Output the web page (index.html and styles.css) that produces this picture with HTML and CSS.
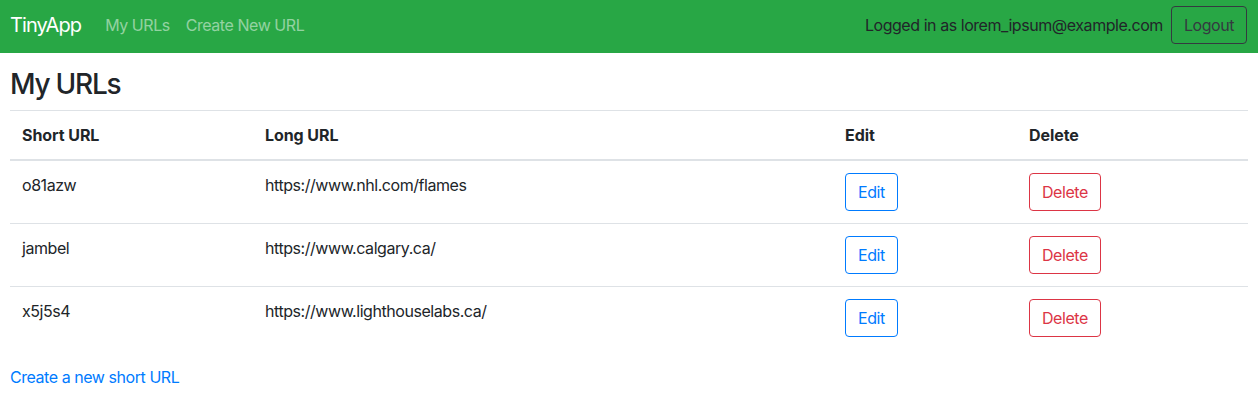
FILE: index.html
```html
<!DOCTYPE html>
<html lang="en">
<head>
<meta charset="utf-8">
<title>TinyApp</title>
<link rel="stylesheet" href="styles.css">
</head>
<body>
<nav class="navbar">
  <div class="nav-left">
    <a class="brand" href="#">TinyApp</a>
    <a class="nav-link" href="#">My URLs</a>
    <a class="nav-link" href="#">Create New URL</a>
  </div>
  <div class="nav-right">
    <span class="nav-text">Logged in as lorem_ipsum@example.com</span>
    <button class="btn btn-dark">Logout</button>
  </div>
</nav>
<main class="page">
  <h1 class="title">My URLs</h1>
  <table class="table">
    <thead>
      <tr>
        <th class="c1">Short URL</th>
        <th class="c2">Long URL</th>
        <th class="c3">Edit</th>
        <th class="c4">Delete</th>
      </tr>
    </thead>
    <tbody>
      <tr>
        <td>o81azw</td>
        <td>https://www.nhl.com/flames</td>
        <td><button class="btn btn-blue">Edit</button></td>
        <td><button class="btn btn-red">Delete</button></td>
      </tr>
      <tr>
        <td>jambel</td>
        <td>https://www.calgary.ca/</td>
        <td><button class="btn btn-blue">Edit</button></td>
        <td><button class="btn btn-red">Delete</button></td>
      </tr>
      <tr>
        <td>x5j5s4</td>
        <td>https://www.lighthouselabs.ca/</td>
        <td><button class="btn btn-blue">Edit</button></td>
        <td><button class="btn btn-red">Delete</button></td>
      </tr>
    </tbody>
  </table>
  <a class="link" href="#">Create a new short URL</a>
</main>
</body>
</html>
```
FILE: styles.css
```css
* { box-sizing: border-box; }
html, body { margin: 0; }
body {
  font-family: Inter, "Noto Sans", "Liberation Sans", sans-serif;
  font-size: 16px;
  line-height: 1.5;
  letter-spacing: -0.028em;
  color: #212529;
  background: #fff;
}
a { text-decoration: none; }
.navbar {
  background: #28a745;
  height: 53px;
  padding: 6px 11px 9px 10px;
  display: flex;
  justify-content: space-between;
  align-items: center;
}
.nav-left { display: flex; align-items: center; }
.brand {
  color: #fff;
  font-size: 20px;
  line-height: 30px;
  letter-spacing: -0.045em;
  margin-right: 16px;
}
.nav-link {
  color: rgba(255, 255, 255, 0.5);
  padding: 8px;
}
.nav-right { display: flex; align-items: center; gap: 8px; }
.nav-text { color: #212529; }
.btn {
  font-family: inherit;
  font-size: 16px;
  line-height: 24px;
  letter-spacing: inherit;
  padding: 6px 12px;
  border-radius: 4px;
  background: transparent;
  border: 1px solid;
  cursor: pointer;
}
.btn-dark { color: #343a40; border-color: #343a40; }
.btn-blue { color: #007bff; border-color: #007bff; }
.btn-red { color: #dc3545; border-color: #dc3545; }
.page { padding: 0 10px 0 10px; }
.title {
  font-size: 28px;
  font-weight: 500;
  line-height: 1.2;
  letter-spacing: -0.045em;
  margin: 15px 0 8px;
}
.table {
  width: 100%;
  border-collapse: collapse;
  margin-bottom: 16px;
}
.table th, .table td {
  padding: 12px;
  text-align: left;
  vertical-align: top;
  border-top: 1px solid #dee2e6;
}
.table th { font-weight: 700; letter-spacing: -0.005em; }
.table thead th { border-bottom: 2px solid #dee2e6; }
.c1 { width: 243px; }
.c2 { width: 580px; }
.c3 { width: 184px; }
.link { color: #007bff; }
```
